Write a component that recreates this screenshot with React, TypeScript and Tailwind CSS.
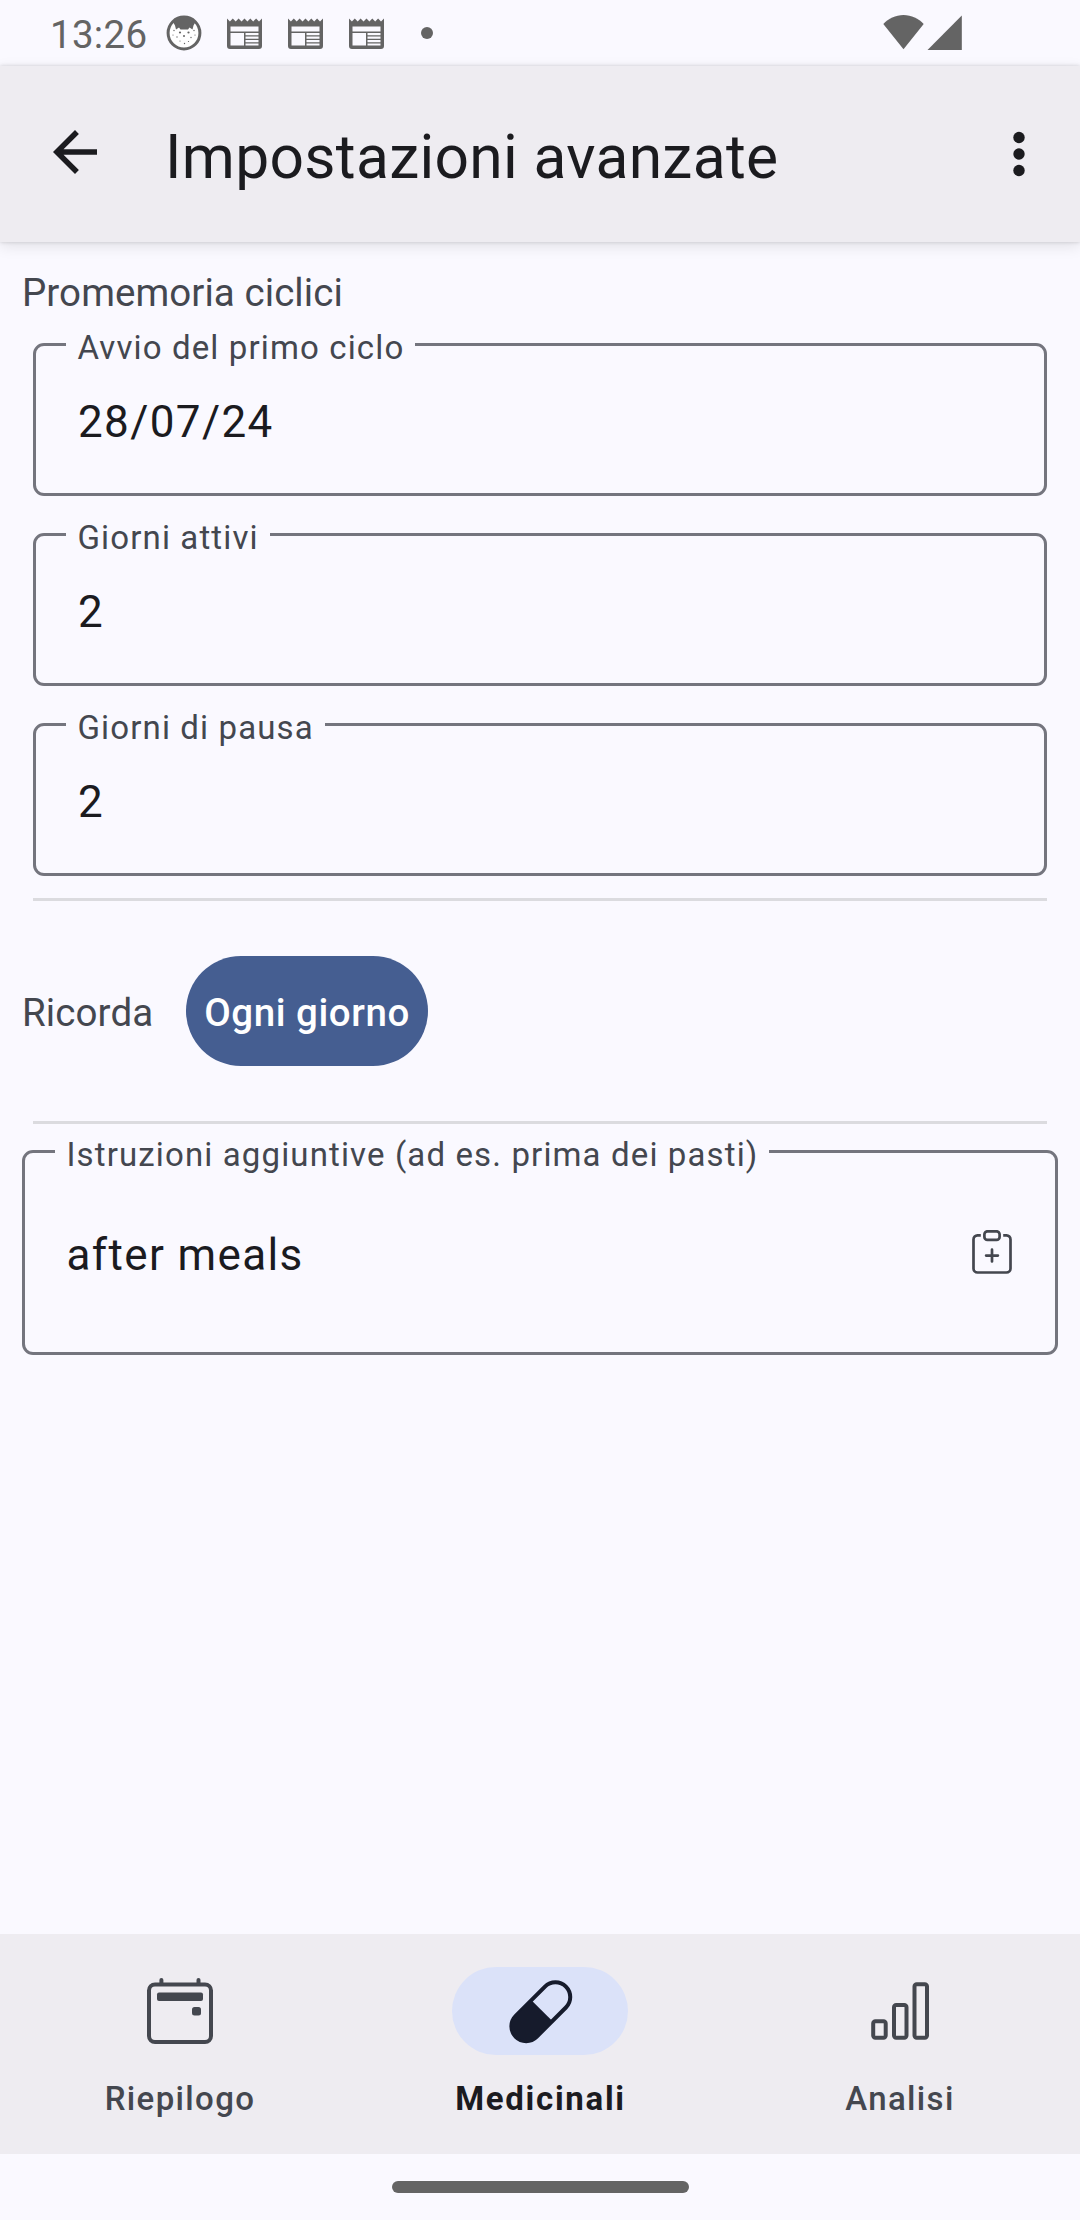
import type { ReactNode } from "react";

function BearIcon() {
  return (
    <svg className="h-[36px] w-[36px]" viewBox="0 0 36 36">
      <circle cx="18" cy="18" r="15.900" fill="#fff" stroke="#646464" strokeWidth="3" />
      <path d="M7 7C10 3 14 1 18 1s8 2 11.500 6L27.500 10.500 26.500 14.500 23.500 12.500 22 14.500H14.500L13 12.500 10 14.500 9 10.500z" fill="#646464" />
      <g fill="#646464">
        <circle cx="14" cy="17.500" r="1.100" />
        <circle cx="22.500" cy="17.500" r="1.100" />
        <circle cx="18" cy="21" r="1" />
        <circle cx="8" cy="15.500" r=".7" />
        <circle cx="28" cy="15.500" r=".7" />
        <circle cx="7" cy="20" r=".6" />
        <circle cx="29" cy="20" r=".6" />
        <circle cx="11" cy="22" r=".7" />
        <circle cx="25" cy="22.500" r=".7" />
        <circle cx="14" cy="26" r=".6" />
        <circle cx="18.500" cy="28.500" r=".7" />
        <circle cx="22.500" cy="26.500" r=".6" />
      </g>
    </svg>
  );
}

function NewsIcon() {
  return (
    <svg className="h-[31px] w-[35px]" viewBox="0 0 35 31">
      <path
        fill="#646464"
        fillRule="evenodd"
        d="M0 0.500L2.900 3.500 5.800 0.500 8.700 3.500 11.600 0.500 14.500 3.500 17.500 0.500 20.400 3.500 23.300 0.500 26.200 3.500 29.100 0.500 32 3.500 35 0.500V28a3 3 0 0 1-3 3H3a3 3 0 0 1-3-3zM3.500 8.500V13.500H31.500V8.500zM3.500 15V27.500H17V15zM18.500 15V17.300H31.500V15zM18.500 18.500V20.700H31.500V18.500zM18.500 22V24.200H31.500V22zM18.500 25.400V27.500H31.500V25.400z"
      />
    </svg>
  );
}

function StatusBar() {
  return (
    <div className="flex h-[66px] shrink-0 items-start">
      <span className="mt-[13px] ml-[50px] w-[115.5px] text-[38.5px] leading-[44px] tracking-[0.3px] text-[#646464]">13:26</span>
      <div className="mt-[15px]">
        <BearIcon />
      </div>
      <div className="mt-[18px] ml-[25.5px] flex gap-[26px]">
        <NewsIcon />
        <NewsIcon />
        <NewsIcon />
      </div>
      <span className="mt-[27px] ml-[37px] size-[12px] rounded-full bg-[#646464]" />
      <svg className="mt-[15px] mr-[118px] ml-auto h-[35px] w-[79px]" viewBox="0 0 79 35" fill="#646464">
        <path d="M0.300 9C5.500 3.500 12.500 0 20.500 0S35.500 3.500 40.700 9L20.500 34.300z" />
        <path d="M44.500 34.900L78.800 0.500V34.900z" />
      </svg>
    </div>
  );
}

function Field({ label, value, className, valueClass, children }: { label: string; value: string; className: string; valueClass: string; children?: ReactNode }) {
  return (
    <div className={`relative flex items-start justify-between rounded-[11px] border-[3px] border-[#74757e] ${className}`}>
      <span className="absolute top-[-18px] left-[30px] bg-[#faf9ff] pr-[11px] pl-[11.5px] text-[33px] leading-[40px] tracking-[1.13px] whitespace-nowrap text-[#44474f]">
        {label}
      </span>
      <span className={`text-[44px] leading-[52px] tracking-[1.375px] text-[#1b1b1f] ${valueClass}`}>{value}</span>
      {children}
    </div>
  );
}

function NavItem({ label, active, children }: { label: string; active?: boolean; children: ReactNode }) {
  return (
    <div className="flex w-[360px] flex-col items-center pt-[33px]">
      <div className={`flex h-[88px] w-[176px] items-center justify-center rounded-full ${active ? "bg-[#dbe2f9]" : ""}`}>{children}</div>
      <span
        className={`mt-[22px] text-[33px] leading-[44px] ${
          active ? "pl-[1px] font-bold tracking-[1.7px] text-[#1b1b1f]" : "font-medium tracking-[1.35px] text-[#44474f]"
        }`}
      >
        {label}
      </span>
    </div>
  );
}

export default function App() {
  return (
    <div className="flex h-[2220px] w-[1080px] flex-col overflow-hidden bg-[#faf9ff] font-['Roboto',sans-serif]">
      <StatusBar />

      <header className="flex h-[176px] shrink-0 items-start bg-[#eeecf1] shadow-[0_4px_14px_rgba(0,0,0,0.10),0_0_4px_rgba(0,0,0,0.16)]">
        <svg className="mt-[53px] ml-[42px] size-[66px] shrink-0" viewBox="0 0 24 24" fill="#1b1b1f">
          <path d="M20 11H7.830l5.590-5.590L12 4l-8 8 8 8 1.410-1.410L7.830 13H20z" />
        </svg>
        <h1 className="mt-[56px] ml-[57px] text-[60.5px] leading-[72px] tracking-[0.32px] text-[#1b1b1f]">Impostazioni avanzate</h1>
        <svg className="mt-[55px] mr-[28px] ml-auto size-[66px]" viewBox="0 0 66 66" fill="#1b1b1f">
          <circle cx="33" cy="16.500" r="5.700" />
          <circle cx="33" cy="33" r="5.700" />
          <circle cx="33" cy="49.500" r="5.700" />
        </svg>
      </header>

      <main className="flex flex-1 flex-col px-[22px] pt-[25px]">
        <h2 className="text-[38.5px] leading-[52px] tracking-[0.07px] text-[#44474f]">Promemoria ciclici</h2>
        <div className="mx-[11px] mt-[24px] flex flex-col gap-[37px]">
          <Field label="Avvio del primo ciclo" value="28/07/24" className="h-[153px]" valueClass="mt-[50px] ml-[42px]" />
          <Field label="Giorni attivi" value="2" className="h-[153px]" valueClass="mt-[50px] ml-[42px]" />
          <Field label="Giorni di pausa" value="2" className="h-[153px]" valueClass="mt-[50px] ml-[42px]" />
        </div>
        <div className="mx-[11px] mt-[22px] h-[3px] bg-[#dbdbdf]" />
        <div className="my-[55px] flex h-[110px] items-center">
          <span className="w-[164px] pt-[3px] text-[38.5px] leading-[52px] tracking-[0.1px] text-[#44474f]">Ricorda</span>
          <button className="h-[110px] w-[242px] rounded-[55px] bg-[#455e91] pt-[3px] text-[38.5px] leading-[52px] font-medium tracking-[0.55px] whitespace-nowrap text-white">
            Ogni giorno
          </button>
        </div>
        <div className="mx-[11px] h-[3px] bg-[#dbdbdf]" />
        <Field label="Istruzioni aggiuntive (ad es. prima dei pasti)" value="after meals" className="mt-[26px] h-[205px]" valueClass="mt-[76px] ml-[41.5px]">
          <svg className="mt-[77px] mr-[43px] h-[44px] w-[40px]" viewBox="0 0 40 44" fill="none" stroke="#44474f" strokeWidth="2.700" strokeLinecap="round">
            <path d="M8.800 5.400H5.500A4 4 0 0 0 1.500 9.400V38.500A4 4 0 0 0 5.500 42.500H34.500A4 4 0 0 0 38.500 38.500V9.400A4 4 0 0 0 34.500 5.400H31.200" strokeLinecap="butt" />
            <rect x="12.400" y="1.300" width="15.200" height="8.600" rx="3" />
            <path d="M20 19.700V31.500M14.100 25.600H25.900" />
          </svg>
        </Field>
      </main>

      <nav className="flex h-[220px] shrink-0 bg-[#eeecf1]">
        <NavItem label="Riepilogo">
          <svg className="h-[66px] w-[66px]" viewBox="0 0 66 66" fill="#44474f">
            <rect x="2" y="6.500" width="62" height="57.500" rx="6" fill="none" stroke="#44474f" strokeWidth="4" />
            <rect x="12.400" y="0" width="4" height="8" rx="2" />
            <rect x="49.500" y="0" width="4" height="8" rx="2" />
            <rect x="10" y="14.500" width="46" height="8.500" rx="2" />
            <rect x="45" y="29" width="9" height="8.500" rx="2.500" />
          </svg>
        </NavItem>
        <NavItem label="Medicinali" active>
          <svg className="h-[66px] w-[66px]" viewBox="0 0 66 66">
            <g transform="translate(33.800 33.700) rotate(45)">
              <rect x="-14.800" y="-35.500" width="29.600" height="71" rx="14.800" fill="none" stroke="#161b2c" strokeWidth="4" />
              <path d="M-14.800 -1.500H14.800V20.700a14.800 14.800 0 0 1-29.600 0z" fill="#161b2c" />
            </g>
          </svg>
        </NavItem>
        <NavItem label="Analisi">
          <svg className="h-[66px] w-[66px]" viewBox="0 0 66 66" fill="none" stroke="#44474f" strokeWidth="4">
            <rect x="6.200" y="43.200" width="12.500" height="16.500" rx="2.200" />
            <rect x="27" y="27" width="12.500" height="32.700" rx="2.200" />
            <rect x="47.500" y="6.200" width="12.500" height="53.500" rx="2.200" />
          </svg>
        </NavItem>
      </nav>

      <div className="flex h-[66px] shrink-0 justify-center pt-[27px]">
        <div className="h-[12px] w-[297px] rounded-full bg-[#646464]" />
      </div>
    </div>
  );
}
